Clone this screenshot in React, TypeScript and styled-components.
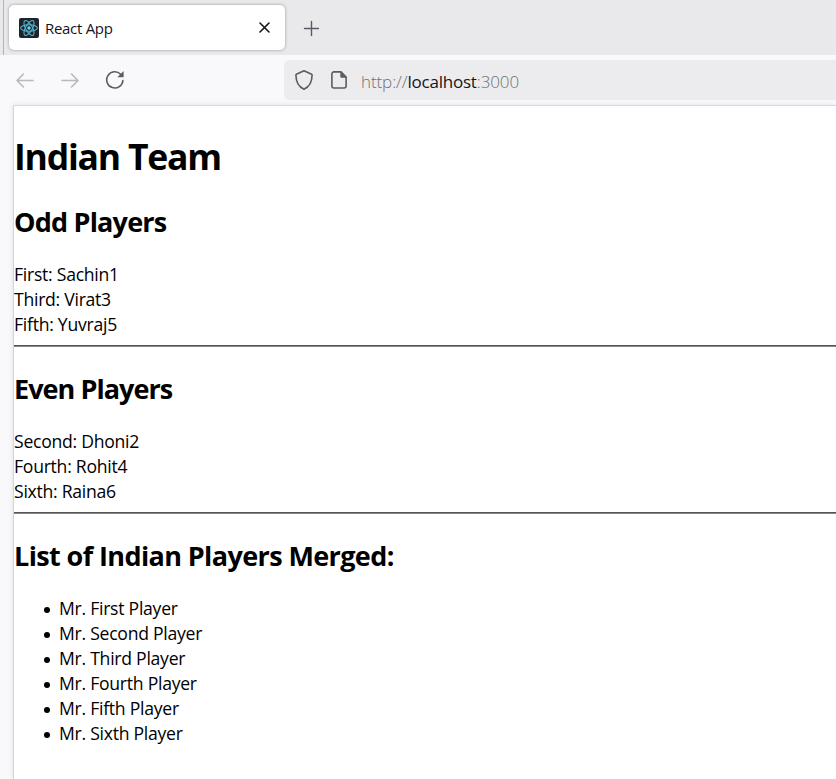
import React from 'react';
import styled, { createGlobalStyle } from 'styled-components';

const GlobalStyle = createGlobalStyle`
  * { box-sizing: border-box; }
  html, body { margin: 0; padding: 0; }
  body {
    background: #f9f9fb;
    font-family: 'Open Sans', 'Noto Sans', sans-serif;
    overflow: hidden;
  }
`;

const Browser = styled.div`
  width: 100%;
  height: 100vh;
  display: flex;
  flex-direction: column;
  overflow: hidden;
`;

const TabStrip = styled.header`
  flex: none;
  height: 55px;
  background: #e9e9eb;
  margin-left: 3px;
  border-left: 1px solid #b4b4b7;
  display: flex;
  align-items: flex-start;
  padding: 5px 0 0 5px;
`;

const StripFrame = styled.div`
  flex: none;
  background: #e9e9eb;
`;

const Tab = styled.div`
  width: 276px;
  height: 45px;
  background: #fff;
  border-radius: 5px;
  box-shadow: 0 0 3px rgba(70, 70, 80, 0.55);
  display: flex;
  align-items: center;
  padding: 0 15px 0 10px;
`;

const TabTitle = styled.span`
  flex: 1;
  margin-left: 6px;
  font-size: 15px;
  line-height: 20px;
  letter-spacing: -0.3px;
  color: #15141a;
  padding-top: 1px;
`;

const IconButton = styled.button<{ $gap?: number }>`
  border: 0;
  padding: 0;
  background: none;
  display: flex;
  margin-left: ${({ $gap = 0 }) => $gap}px;
`;

const NewTab = styled(IconButton)`
  margin: 15px 0 0 18px;
`;

const Toolbar = styled.nav`
  flex: none;
  height: 50px;
  background: #f9f9fb;
  display: flex;
  align-items: center;
  padding-left: 15px;
`;

const AddressBar = styled.div`
  flex: 1;
  height: 40px;
  margin-left: 159px;
  background: #ececee;
  border-radius: 5px 0 0 5px;
  display: flex;
  align-items: center;
  padding-left: 10px;
  gap: 15px;
`;

const Url = styled.span`
  margin-left: -3px;
  padding-top: 4px;
  font-size: 17px;
  font-weight: 300;
  line-height: 24px;
  letter-spacing: -0.1px;
  color: #707074;
`;

const Host = styled.span`
  font-weight: 400;
  letter-spacing: -0.22px;
  color: #15141a;
`;

const Page = styled.main`
  flex: 1;
  margin-left: 13px;
  background: #fff;
  border-top: 1px solid #d9d9dc;
  border-left: 1px solid #d4d4d6;
  box-shadow: 0 0 5px rgba(60, 60, 80, 0.13);
  color: #000;
  overflow: hidden;
`;

const Title = styled.h1`
  margin: 25px 0 23px;
  font-size: 35.5px;
  line-height: 50px;
  letter-spacing: -1.2px;
`;

const Heading = styled.h2<{ $spacing?: number }>`
  margin: 0 0 22px;
  font-size: 27px;
  line-height: 36px;
  letter-spacing: ${({ $spacing = -0.61 }) => $spacing}px;
`;

const Line = styled.div`
  font-size: 17.6px;
  line-height: 25px;
  letter-spacing: -0.26px;
`;

const Rule = styled.hr`
  height: 2px;
  margin: 8px 0 24px;
  border: 0;
  border-top: 1px solid #555;
  border-bottom: 1px solid #858585;
`;

const List = styled.ul`
  list-style: none;
  margin: 0;
  padding: 0 0 0 30px;
`;

const Item = styled.li`
  display: flex;
  align-items: center;
  gap: 9px;
  &::before {
    content: '';
    width: 6px;
    height: 6px;
    border-radius: 50%;
    background: #000;
    margin-top: 2px;
  }
`;

const ReactLogo = () => (
  <svg width="20" height="20" viewBox="0 0 20 20">
    <rect width="20" height="20" rx="2" fill="#20232a" />
    <g fill="none" stroke="#53b9d3" strokeWidth="1.05">
      <ellipse cx="10" cy="10" rx="8.4" ry="3.3" />
      <ellipse cx="10" cy="10" rx="8.4" ry="3.3" transform="rotate(60 10 10)" />
      <ellipse cx="10" cy="10" rx="8.4" ry="3.3" transform="rotate(120 10 10)" />
    </g>
    <circle cx="10" cy="10" r="1.7" fill="#61dafb" />
  </svg>
);

const CloseIcon = () => (
  <svg width="11" height="11" viewBox="0 0 11 11">
    <path d="M1 1l9 9M10 1l-9 9" stroke="#15141a" strokeWidth="1.6" strokeLinecap="round" />
  </svg>
);

const PlusIcon = () => (
  <svg width="17" height="17" viewBox="0 0 17 17">
    <path d="M8.5 1.5v14M1.5 8.5h14" stroke="#5b5b66" strokeWidth="1.4" strokeLinecap="round" />
  </svg>
);

const ArrowIcon = ({ forward = false }: { forward?: boolean }) => (
  <svg width="20" height="20" viewBox="0 0 20 20">
    <path
      d={forward ? 'M2 10.5h16M11.5 4l6.5 6.5-6.5 6.5' : 'M18 10.5H2M8.5 4L2 10.5l6.5 6.5'}
      fill="none"
      stroke="#b9b9bc"
      strokeWidth="1.6"
      strokeLinecap="round"
      strokeLinejoin="round"
    />
  </svg>
);

const ReloadIcon = () => (
  <svg width="20" height="20" viewBox="0 0 20 20">
    <path
      d="M17.9 10.5A8.1 8.1 0 1 1 15.6 4.2"
      fill="none"
      stroke="#5b5b66"
      strokeWidth="1.6"
      strokeLinecap="round"
    />
    <path d="M18.6 1v6.2h-6.2z" fill="#5b5b66" />
  </svg>
);

const ShieldIcon = () => (
  <svg width="20" height="22" viewBox="0 0 20 22">
    <path
      d="M10 1.7L17.6 5.2a.9.9 0 0 1 .5.9C18 12.8 15.4 18 10 20.2 4.6 18 2 12.8 1.9 6.1a.9.9 0 0 1 .5-.9z"
      fill="none"
      stroke="#5b5b60"
      strokeWidth="1.6"
      strokeLinejoin="round"
    />
  </svg>
);

const PageIcon = () => (
  <svg width="20" height="20" viewBox="0 0 20 20">
    <path
      d="M4.9 1.9H12l5.1 5.1V16a2 2 0 0 1-2 2H4.9a2 2 0 0 1-2-2V3.9a2 2 0 0 1 2-2z"
      fill="none"
      stroke="#5b5b60"
      strokeWidth="1.6"
      strokeLinejoin="round"
    />
    <path d="M11.3 1.5L17.6 7.7h-5a1.3 1.3 0 0 1-1.3-1.3z" fill="#5b5b60" />
  </svg>
);

const groups = [
  {
    title: 'Odd Players',
    spacing: -0.8,
    players: ['First: Sachin1', 'Third: Virat3', 'Fifth: Yuvraj5'],
  },
  {
    title: 'Even Players',
    spacing: -0.96,
    players: ['Second: Dhoni2', 'Fourth: Rohit4', 'Sixth: Raina6'],
  },
];

const merged = ['First', 'Second', 'Third', 'Fourth', 'Fifth', 'Sixth'];

export default function App() {
  return (
    <Browser>
      <GlobalStyle />
      <StripFrame>
        <TabStrip>
          <Tab>
            <ReactLogo />
            <TabTitle>React App</TabTitle>
            <IconButton aria-label="Close tab" $gap={4}>
              <CloseIcon />
            </IconButton>
          </Tab>
          <NewTab aria-label="New tab">
            <PlusIcon />
          </NewTab>
        </TabStrip>
      </StripFrame>
      <Toolbar>
        <IconButton aria-label="Back">
          <ArrowIcon />
        </IconButton>
        <IconButton aria-label="Forward" $gap={25}>
          <ArrowIcon forward />
        </IconButton>
        <IconButton aria-label="Reload" $gap={25}>
          <ReloadIcon />
        </IconButton>
        <AddressBar>
          <ShieldIcon />
          <PageIcon />
          <Url>
            http://<Host>localhost</Host>:3000
          </Url>
        </AddressBar>
      </Toolbar>
      <Page>
        <Title>Indian Team</Title>
        {groups.map((group) => (
          <section key={group.title}>
            <Heading $spacing={group.spacing}>{group.title}</Heading>
            {group.players.map((player) => (
              <Line key={player}>{player}</Line>
            ))}
            <Rule />
          </section>
        ))}
        <Heading>List of Indian Players Merged:</Heading>
        <List>
          {merged.map((name) => (
            <Item key={name}>
              <Line>Mr. {name} Player</Line>
            </Item>
          ))}
        </List>
      </Page>
    </Browser>
  );
}
